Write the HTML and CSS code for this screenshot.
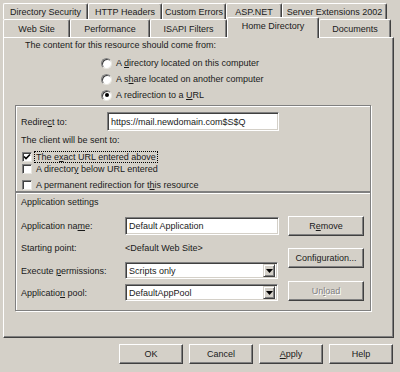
FILE: index.html
```html
<!DOCTYPE html>
<html lang="en">
<head>
    <meta charset="UTF-8" />
    <meta name="viewport" content="width=device-width, initial-scale=1.0" />
    <title>Default Web Site Properties</title>
    <link rel="stylesheet" href="styles.css">
</head>
<body>
<div class="dialog">
    <div class="tab-row back">
        <div class="tab tab-dirsec">Directory Security</div>
        <div class="tab tab-http">HTTP Headers</div>
        <div class="tab tab-errors">Custom Errors</div>
        <div class="tab tab-asp">ASP.NET</div>
        <div class="tab tab-ext">Server Extensions 2002</div>
    </div>
    <div class="tab-row front">
        <div class="tab tab-web">Web Site</div>
        <div class="tab tab-perf">Performance</div>
        <div class="tab tab-isapi">ISAPI Filters</div>
        <div class="tab tab-home selected">Home Directory</div>
        <div class="tab tab-docs">Documents</div>
    </div>

    <div class="panel">
        <p class="source-title">The content for this resource should come from:</p>
        <div class="radio-list">
            <div class="radio-row"><span class="radio"></span><span>A <u>d</u>irectory located on this computer</span></div>
            <div class="radio-row"><span class="radio"></span><span>A s<u>h</u>are located on another computer</span></div>
            <div class="radio-row"><span class="radio on"></span><span>A redirection to a <u>U</u>RL</span></div>
        </div>

        <div class="group redirect">
            <div class="redirect-row">
                <span class="redirect-label">Redire<u>c</u>t to:</span>
                <div class="textbox url">https://mail.newdomain.com$S$Q</div>
            </div>
            <p class="client-title">The client will be sent to:</p>
            <div class="check-list">
                <div class="check-row">
                    <span class="check"><svg width="8" height="8" viewBox="0 0 8 8"><polyline points="1,3.5 3,5.5 7,1.5" fill="none" stroke="#000" stroke-width="1.6"/></svg></span>
                    <span class="check-text focus">The e<u>x</u>act URL entered above</span>
                </div>
                <div class="check-row">
                    <span class="check"></span>
                    <span class="check-text">A director<u>y</u> below URL entered</span>
                </div>
                <div class="check-row spaced">
                    <span class="check"></span>
                    <span class="check-text">A permanent redirection for t<u>h</u>is resource</span>
                </div>
            </div>
        </div>

        <div class="group app">
            <p class="app-title">Application settings</p>
            <div class="app-body">
                <div class="app-fields">
                    <div class="field-row row-name">
                        <span class="field-label">Application na<u>m</u>e:</span>
                        <div class="textbox app-name">Default Application</div>
                    </div>
                    <div class="field-row row-start">
                        <span class="field-label">Starting point:</span>
                        <span>&lt;Default Web Site&gt;</span>
                    </div>
                    <div class="field-row row-exec">
                        <span class="field-label">Execute <u>p</u>ermissions:</span>
                        <div class="select">
                            <span class="select-value">Scripts only</span>
                            <span class="select-arrow"><svg width="7" height="4" viewBox="0 0 7 4"><polygon points="0,0 7,0 3.5,4" fill="#000"/></svg></span>
                        </div>
                    </div>
                    <div class="field-row row-pool">
                        <span class="field-label">Applicatio<u>n</u> pool:</span>
                        <div class="select">
                            <span class="select-value">DefaultAppPool</span>
                            <span class="select-arrow"><svg width="7" height="4" viewBox="0 0 7 4"><polygon points="0,0 7,0 3.5,4" fill="#000"/></svg></span>
                        </div>
                    </div>
                </div>
                <div class="app-buttons">
                    <div class="btn btn-remove"><span>R<u>e</u>move</span></div>
                    <div class="btn btn-config">Configuration...</div>
                    <div class="btn btn-unload disabled"><span>Un<u>l</u>oad</span></div>
                </div>
            </div>
        </div>
    </div>

    <div class="dialog-buttons">
        <div class="btn">OK</div>
        <div class="btn">Cancel</div>
        <div class="btn"><span><u>A</u>pply</span></div>
        <div class="btn">Help</div>
    </div>
</div>
</body>
</html>
```

FILE: styles.css
```css
* { box-sizing: border-box; margin: 0; padding: 0; }
body {
    font-family: "Liberation Sans", Arial, sans-serif;
    font-size: 9px;
    color: #1a1a1a;
    background-color: #d4d0c8;
}
u { text-underline-offset: 1px; }

.dialog {
    width: 400px;
    height: 372px;
    padding-top: 3px;
}

/* Tabs */
.tab-row {
    display: flex;
    margin-left: 3px;
}
.tab-row.back { height: 16px; }
.tab-row.front { height: 18px; align-items: flex-end; }
.tab {
    display: flex;
    align-items: center;
    justify-content: center;
    height: 100%;
    white-space: nowrap;
    background-color: #d4d0c8;
    border-top: 1px solid #fff;
    border-left: 1px solid #fff;
    border-right: 1px solid #404040;
    border-radius: 2px 2px 0 0;
    box-shadow: inset -1px 0 #808080;
}
.tab.selected {
    position: relative;
    z-index: 1;
    height: 21px;
    margin-bottom: -1px;
    padding-bottom: 4px;
}
.tab-dirsec { width: 85px; }
.tab-http { width: 74px; }
.tab-errors { width: 64px; }
.tab-asp { width: 56px; }
.tab-ext { width: 105px; }
.tab-web { width: 67px; }
.tab-perf { width: 80px; }
.tab-isapi { width: 77px; }
.tab-home { width: 92px; }
.tab-docs { width: 72px; }

/* Panel */
.panel {
    width: 391px;
    height: 301px;
    margin-left: 3px;
    border: 1px solid;
    border-color: #fff #404040 #404040 #fff;
    box-shadow: inset -1px -1px #808080;
}
.source-title {
    margin-top: 2px;
    padding-left: 21px;
    line-height: 10px;
}
.radio-list {
    margin-top: 5px;
    margin-left: 97px;
}
.radio-row {
    display: flex;
    align-items: center;
    height: 16px;
}
.radio {
    display: flex;
    align-items: center;
    justify-content: center;
    width: 11px;
    height: 11px;
    margin-right: 4px;
    border-radius: 50%;
    background-color: #fff;
    border: 1px solid;
    border-color: #808080 #e8e6e0 #e8e6e0 #808080;
    box-shadow: inset 1px 1px #404040;
}
.radio.on::after {
    content: "";
    width: 4px;
    height: 4px;
    border-radius: 50%;
    background-color: #000;
}

/* Group boxes */
.group {
    margin-left: 11px;
    width: 356px;
    border: 1px solid #808080;
    box-shadow: 1px 1px #fff, inset 1px 1px #fff;
}
.group.redirect {
    margin-top: 2px;
    height: 87px;
    padding: 6px 0 0 5px;
}
.group.app {
    height: 119px;
    padding: 4px 0 0 5px;
}

.redirect-row {
    display: flex;
    align-items: center;
    height: 19px;
}
.redirect-label { width: 86px; }
.textbox {
    display: flex;
    align-items: center;
    padding-left: 3px;
    background-color: #fff;
    border: 1px solid;
    border-color: #808080 #fff #fff #808080;
    box-shadow: inset 1px 1px #404040, inset -1px -1px #d4d0c8;
    white-space: nowrap;
}
.textbox.url { width: 172px; height: 19px; }
.textbox.app-name { width: 154px; height: 18px; }

.client-title {
    margin-top: 4px;
    line-height: 10px;
}
.check-list { margin-top: 6px; }
.check-row {
    display: flex;
    align-items: center;
    height: 12px;
    margin-left: 1px;
}
.check-row.spaced { margin-top: 4px; }
.check {
    display: flex;
    align-items: center;
    justify-content: center;
    width: 10px;
    height: 10px;
    margin-right: 3px;
    background-color: #fff;
    border: 1px solid;
    border-color: #808080 #e8e6e0 #e8e6e0 #808080;
    box-shadow: inset 1px 1px #404040;
}
.check-text {
    padding: 0 1px;
    line-height: 10px;
}
.check-text.focus { outline: 1px dotted #000; }

/* Application settings */
.app-title { line-height: 10px; }
.app-body {
    display: flex;
    margin-top: 9px;
}
.app-fields { width: 258px; }
.field-row {
    display: flex;
    align-items: center;
}
.field-label { width: 104px; flex-shrink: 0; }
.row-name { margin-top: 1px; height: 18px; }
.row-start { margin-top: 8px; height: 10px; }
.row-exec { margin-top: 9px; height: 17px; }
.row-pool { margin-top: 5px; height: 17px; }

.select {
    display: flex;
    align-items: center;
    width: 153px;
    height: 17px;
    background-color: #fff;
    border: 1px solid;
    border-color: #808080 #fff #fff #808080;
    box-shadow: inset 1px 1px #404040, inset -1px -1px #d4d0c8;
    padding: 2px 2px 2px 3px;
}
.select-value { flex: 1; }
.select-arrow {
    display: flex;
    align-items: center;
    justify-content: center;
    width: 12px;
    height: 13px;
    background-color: #d4d0c8;
    border: 1px solid;
    border-color: #d4d0c8 #404040 #404040 #d4d0c8;
    box-shadow: inset 1px 1px #fff, inset -1px -1px #808080;
}

.app-buttons {
    width: 76px;
    margin-left: 9px;
}
.btn {
    display: flex;
    align-items: center;
    justify-content: center;
    height: 20px;
    background-color: #d4d0c8;
    border: 1px solid;
    border-color: #fff #404040 #404040 #fff;
    box-shadow: inset -1px -1px #808080;
    white-space: nowrap;
}
.btn-config { margin-top: 12px; }
.btn-unload { margin-top: 13px; }
.btn.disabled {
    color: #808080;
    text-shadow: 1px 1px #fff;
}

/* Bottom buttons */
.dialog-buttons {
    display: flex;
    justify-content: flex-end;
    gap: 6px;
    margin-top: 6px;
    padding-right: 7px;
}
.dialog-buttons .btn { width: 64px; }
```
